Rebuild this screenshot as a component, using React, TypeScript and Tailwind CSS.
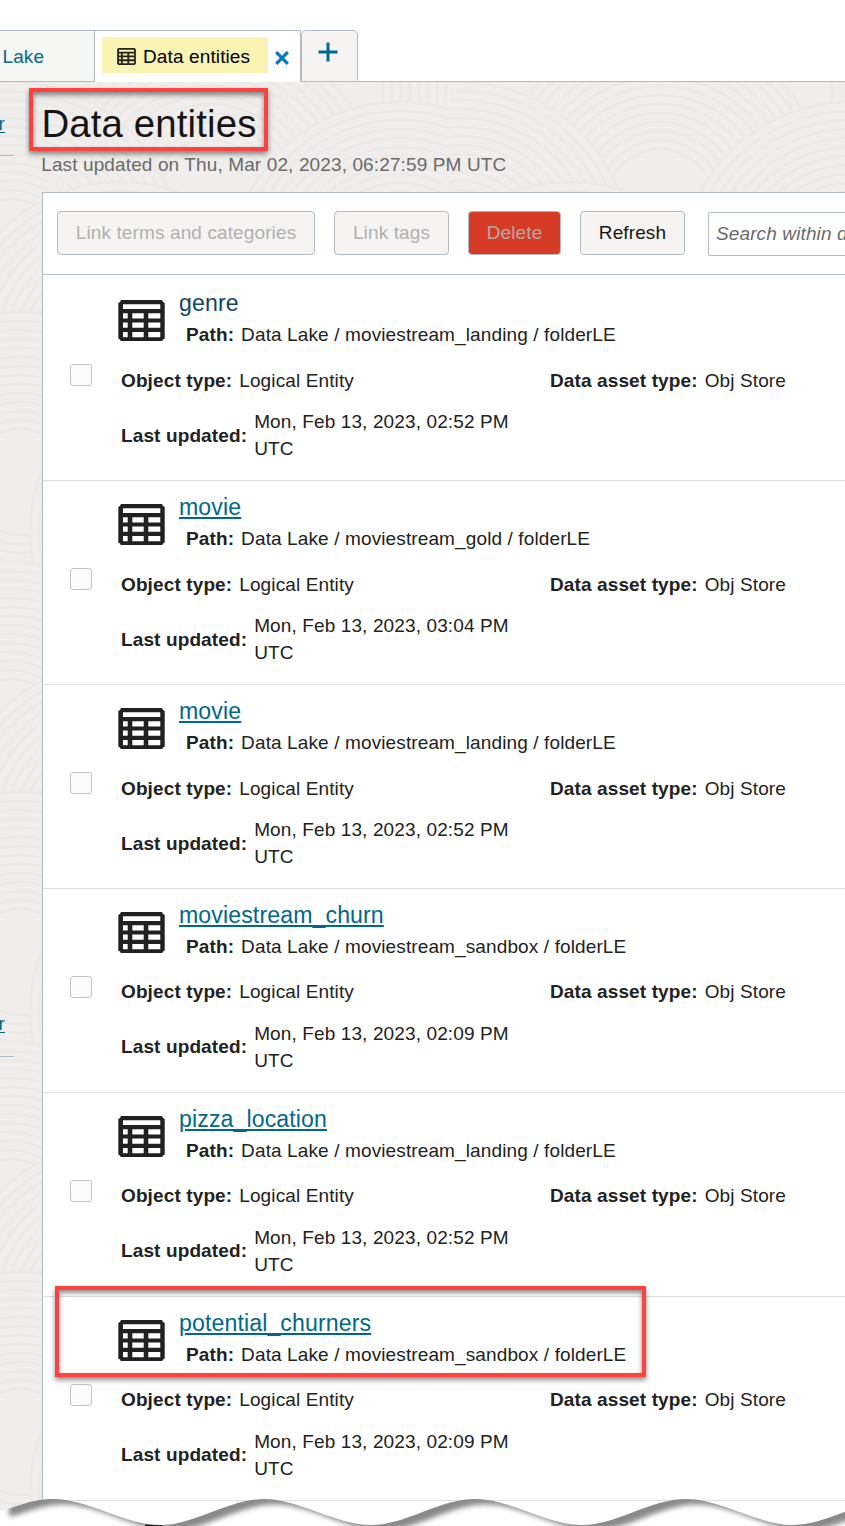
import React from 'react';

type Entity = { name: string; folder: string; time: string; hovered?: boolean };

const entities: Entity[] = [
  { name: 'genre', folder: 'moviestream_landing', time: '02:52', hovered: true },
  { name: 'movie', folder: 'moviestream_gold', time: '03:04' },
  { name: 'movie', folder: 'moviestream_landing', time: '02:52' },
  { name: 'moviestream_churn', folder: 'moviestream_sandbox', time: '02:09' },
  { name: 'pizza_location', folder: 'moviestream_landing', time: '02:52' },
  { name: 'potential_churners', folder: 'moviestream_sandbox', time: '02:09' },
];

function TableIcon({ className }: { className: string }) {
  return (
    <svg viewBox="0 0 47 41" preserveAspectRatio="none" className={className}>
      <path
        fill="currentColor"
        fillRule="evenodd"
        d="M3 0H44L45 2L46.7 3V38L45 39L44 41H3L2 39L.3 38V3L2 2ZM5 4.2V9H42.3V4.2ZM5 13V18.3H9.7V13ZM14.3 13V18.3H25.7V13ZM30.3 13V18.3H42.3V13ZM5 22.3V27.3H9.7V22.3ZM14.3 22.3V27.3H25.7V22.3ZM30.3 22.3V27.3H42.3V22.3ZM5 31.7V36.7H9.7V31.7ZM14.3 31.7V36.7H25.7V31.7ZM30.3 31.7V36.7H42.3V31.7Z"
      />
    </svg>
  );
}

const swirls = [
  [90, 20], [330, 10], [210, 120], [10, 170], [400, 190], [120, 270], [310, 330], [20, 400], [430, 430], [200, 450],
];
const radii = [170, 161, 152, 143, 134, 125, 116, 107, 98, 89, 80, 71, 62, 53];

function Texture() {
  return (
    <svg className="absolute inset-0 h-full w-full" aria-hidden="true">
      <defs>
        <pattern id="swirl" width="450" height="480" patternUnits="userSpaceOnUse">
          <rect width="450" height="480" fill="#efeeec" />
          {swirls.map(([x, y]) =>
            radii.map((r) => (
              <circle key={`${x}-${y}-${r}`} cx={x} cy={y} r={r} fill="#efeeec" stroke="#ebeae8" strokeWidth="2.5" />
            )),
          )}
        </pattern>
      </defs>
      <rect width="100%" height="100%" fill="url(#swirl)" />
    </svg>
  );
}

function ToolButton({ label, className }: { label: string; className: string }) {
  return (
    <button
      className={`flex h-[44px] shrink-0 items-center justify-center rounded-[4px] border border-[#b4bac4] pb-px leading-[27px] tracking-[0.12px] ${className}`}
    >
      {label}
    </button>
  );
}

function EntityRow({ entity, index }: { entity: Entity; index: number }) {
  const late = index > 2;
  return (
    <div className={`flex border-b border-[#dddee0] ${index === 0 ? 'h-[206px] pt-[2px]' : 'h-[204px]'}`}>
      <div className="w-[75px] shrink-0 pl-[27px] pt-[87px]">
        <div className="h-[22px] w-[22px] rounded-[3px] border border-[#c4c4c4] bg-[#fbfbfb]" />
      </div>
      <div className="min-w-0 flex-1">
        <div className="flex h-[71px]">
          <TableIcon className="mt-[22.5px] h-[41.5px] w-[47px] shrink-0 text-[#212121]" />
          <div className="pl-[14px] pt-[11px]">
            <div className="h-[30px] text-[23.1px] leading-[30px] tracking-[0.12px]">
              <a
                className={
                  entity.hovered
                    ? 'text-[#0f4662]'
                    : 'text-[#00688c] underline decoration-2 underline-offset-2'
                }
              >
                {entity.name}
              </a>
            </div>
            <div className="mt-[3px] flex gap-[7px] whitespace-nowrap pl-[7px]">
              <b>Path:</b>
              <span>{`Data Lake / ${entity.folder} / folderLE`}</span>
            </div>
          </div>
        </div>
        <div className={`flex pl-[3px] ${late ? 'mb-[15px] mt-[18px]' : 'mb-[14px] mt-[19px]'}`}>
          <div className="flex w-[429px] shrink-0 gap-[7px]">
            <b>Object type:</b>
            <span>Logical Entity</span>
          </div>
          <div className="flex shrink-0 gap-[7px] whitespace-nowrap">
            <b>Data asset type:</b>
            <span>Obj Store</span>
          </div>
        </div>
        <div className="flex items-center gap-[7px] pl-[3px]">
          <b className={late ? 'pb-[2px]' : ''}>Last updated:</b>
          <span className="w-[262px]">{`Mon, Feb 13, 2023, ${entity.time} PM UTC`}</span>
        </div>
      </div>
    </div>
  );
}

function TornEdge() {
  const wave =
    'M-2 14C14 12 28 2 53 2C88 2 125 28 160 28C195 28 228 2 264 2C299 2 336 28 371 28C406 28 439 2 475 2C510 2 547 28 582 28C617 28 650 2 686 2C721 2 758 28 793 28C828 28 861 2 897 2';
  return (
    <svg className="absolute bottom-0 left-0" width="845" height="29" viewBox="0 0 845 29">
      <defs>
        <clipPath id="below">
          <path d={`${wave}V29H-2Z`} />
        </clipPath>
        <filter id="soft" x="-5%" y="-50%" width="110%" height="200%">
          <feGaussianBlur stdDeviation="2.4" />
        </filter>
      </defs>
      <g clipPath="url(#below)">
        <rect width="845" height="29" fill="#fff" />
        <path d={`${wave}V-20H-2Z`} fill="#8a8a8a" transform="translate(11 5.5)" filter="url(#soft)" />
        <path d="M145 29V27.5H162V29Z" fill="#222" />
      </g>
    </svg>
  );
}

export default function App() {
  return (
    <div className="relative flex h-[1526px] w-[845px] flex-col overflow-hidden bg-white font-['Liberation_Sans',Arial,sans-serif] text-[19px] leading-[27px] tracking-[0.12px] text-[#222222]">
      <header className="flex h-[82px] shrink-0 items-end">
        <div className="flex h-[52px] w-[94px] items-center border-b border-t border-[#b4bac4] bg-[#f5f5f4] pl-[2.5px] text-[#00688c]">
          Lake
        </div>
        <div className="flex h-[52px] w-[207px] items-start border-x border-t border-[#b4bac4] bg-white pl-[7px] pt-[6px]">
          <div className="flex h-[36px] w-[166px] items-center bg-[#f9f3b4] pl-[15px] pt-[2px] text-black">
            <TableIcon className="h-[17px] w-[19px] text-[#26251c]" />
            <span className="pl-[7px]">Data entities</span>
          </div>
          <svg className="ml-[7px] mt-[14px]" width="14" height="14" viewBox="0 0 14 14">
            <path d="M1.2 1.2L12.8 12.8M12.8 1.2L1.2 12.8" stroke="#0478c6" strokeWidth="3.2" />
          </svg>
        </div>
        <div className="flex h-[52px] w-[57px] justify-center rounded-t-[5px] border border-[#b4bac4] bg-[#f5f4f3] pt-[11px]">
          <svg className="-ml-[3px]" width="20" height="20" viewBox="0 0 20 20">
            <path d="M.5 10H19.5M10 .5V19.5" stroke="#00688c" strokeWidth="3" />
          </svg>
        </div>
        <div className="h-[52px] flex-1 border-b border-[#b4bac4]" />
      </header>

      <div className="relative flex min-h-0 flex-1">
        <Texture />
        <aside className="relative w-[42px] shrink-0 text-[#00688c]">
          <div className="h-[74px] w-[14px] overflow-hidden border-b border-[#b4bac4] pt-[28px]">
            <a className="-ml-[1.5px] underline underline-offset-2">r</a>
          </div>
          <div className="mt-[827px] h-[74px] w-[14px] overflow-hidden border-b border-[#b4bac4] pt-[27px]">
            <a className="-ml-[1.5px] underline underline-offset-2">r</a>
          </div>
        </aside>
        <main className="relative flex min-w-0 flex-1 flex-col pt-[17px]">
          <h1 className="-ml-[0.5px] h-[50px] text-[38.4px] leading-[50px] text-[#161513]">Data entities</h1>
          <p className="-ml-[0.8px] mt-[2px] text-[#6b6a68]">Last updated on Thu, Mar 02, 2023, 06:27:59 PM UTC</p>
          <section className="mt-[14px] min-h-0 flex-1 overflow-hidden border-l border-t border-[#b4bac4] bg-white">
            <div className="flex h-[82px] w-[1100px] border-b border-[#b4bac4] pl-[14px] pt-[18px]">
              <ToolButton label="Link terms and categories" className="w-[258px] bg-[#f5f4f2] text-[#b0b0ae]" />
              <ToolButton label="Link tags" className="ml-[19px] w-[115px] bg-[#f5f4f2] text-[#b0b0ae]" />
              <ToolButton label="Delete" className="ml-[19px] w-[93px] bg-[#d63b25] text-[#b5aaa6]" />
              <ToolButton label="Refresh" className="ml-[19px] w-[105px] bg-[#f5f4f2] text-[#161513]" />
              <div className="ml-[23px] mt-px flex h-[44px] w-[280px] shrink-0 items-center whitespace-nowrap rounded-[2px] border border-[#b4bac4] pb-px pl-[7px] italic text-[#6a6a6a]">
                Search within data entities
              </div>
            </div>
            {entities.map((entity, i) => (
              <EntityRow key={i} entity={entity} index={i} />
            ))}
          </section>
        </main>
      </div>

      <div className="absolute left-[29px] top-[88px] h-[63px] w-[239px] border-[4px] border-[#fd4342] shadow-[0_3px_5px_rgba(0,0,0,0.45),inset_0_3px_5px_rgba(0,0,0,0.45)]" />
      <div className="absolute left-[55px] top-[1286px] h-[91px] w-[591px] border-[4px] border-[#fd4342] shadow-[0_3px_5px_rgba(0,0,0,0.45),inset_0_3px_5px_rgba(0,0,0,0.45)]" />
      <TornEdge />
    </div>
  );
}
